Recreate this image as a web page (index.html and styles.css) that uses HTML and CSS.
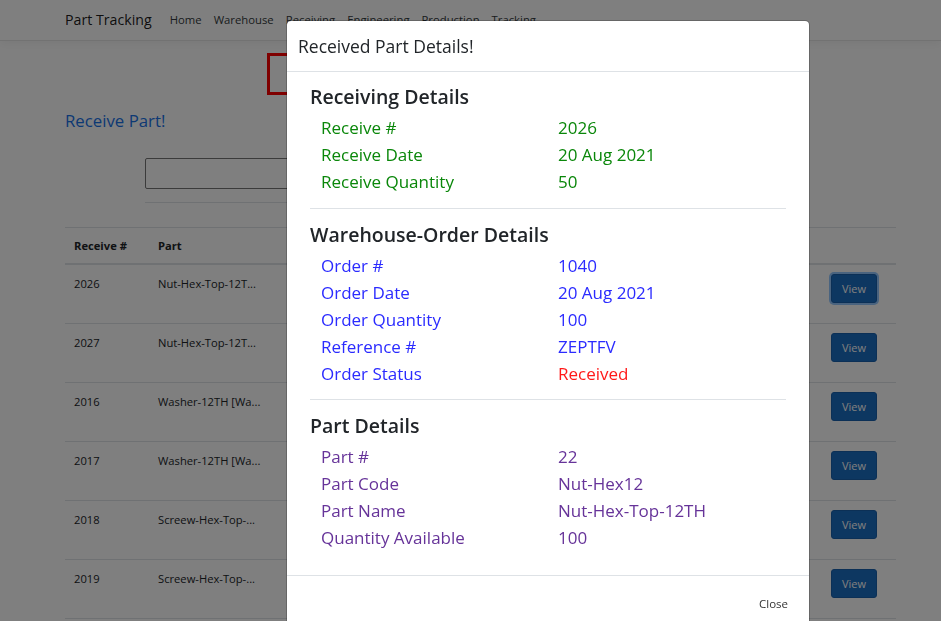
FILE: index.html
```html
<!DOCTYPE html>
<html lang="en">
<head>
<meta charset="utf-8">
<title>Part Tracking</title>
<link rel="stylesheet" href="styles.css">
</head>
<body>
<header class="navbar">
  <div class="nav-inner">
    <a class="brand">Part Tracking</a>
    <nav class="nav-links">
      <a>Home</a>
      <a>Warehouse</a>
      <a>Receiving</a>
      <a>Engineering</a>
      <a>Production</a>
      <a>Tracking</a>
    </nav>
  </div>
</header>

<main class="page">
  <div class="banner"></div>
  <h2 class="page-title">Receive Part!</h2>
  <div class="search"><input class="search-input" type="text"></div>
  <hr class="search-rule">
  <table class="parts">
    <thead>
      <tr><th class="c-num">Receive #</th><th class="c-part">Part</th><th class="c-fill"></th><th class="c-act"></th></tr>
    </thead>
    <tbody>
      <tr><td>2026</td><td>Nut-Hex-Top-12T...</td><td></td><td class="c-act"><button class="btn-view is-focused">View</button></td></tr>
      <tr><td>2027</td><td>Nut-Hex-Top-12T...</td><td></td><td class="c-act"><button class="btn-view">View</button></td></tr>
      <tr><td>2016</td><td>Washer-12TH [Wa...</td><td></td><td class="c-act"><button class="btn-view">View</button></td></tr>
      <tr><td>2017</td><td>Washer-12TH [Wa...</td><td></td><td class="c-act"><button class="btn-view">View</button></td></tr>
      <tr><td>2018</td><td>Screew-Hex-Top-...</td><td></td><td class="c-act"><button class="btn-view">View</button></td></tr>
      <tr><td>2019</td><td>Screew-Hex-Top-...</td><td></td><td class="c-act"><button class="btn-view">View</button></td></tr>
    </tbody>
  </table>
</main>

<div class="backdrop">
  <div class="modal">
    <div class="modal-header">
      <h5 class="modal-title">Received Part Details!</h5>
    </div>
    <div class="modal-body">
      <section class="detail-section">
        <h4 class="section-title">Receiving Details</h4>
        <dl class="details tone-green">
          <dt>Receive #</dt><dd>2026</dd>
          <dt>Receive Date</dt><dd>20 Aug 2021</dd>
          <dt>Receive Quantity</dt><dd>50</dd>
        </dl>
      </section>
      <hr class="section-rule">
      <section class="detail-section">
        <h4 class="section-title">Warehouse-Order Details</h4>
        <dl class="details tone-blue">
          <dt>Order #</dt><dd>1040</dd>
          <dt>Order Date</dt><dd>20 Aug 2021</dd>
          <dt>Order Quantity</dt><dd>100</dd>
          <dt>Reference #</dt><dd>ZEPTFV</dd>
          <dt>Order Status</dt><dd class="status-received">Received</dd>
        </dl>
      </section>
      <hr class="section-rule">
      <section class="detail-section">
        <h4 class="section-title">Part Details</h4>
        <dl class="details tone-purple">
          <dt>Part #</dt><dd>22</dd>
          <dt>Part Code</dt><dd>Nut-Hex12</dd>
          <dt>Part Name</dt><dd>Nut-Hex-Top-12TH</dd>
          <dt>Quantity Available</dt><dd>100</dd>
        </dl>
      </section>
    </div>
    <div class="modal-footer">
      <button class="btn-close">Close</button>
    </div>
  </div>
</div>
</body>
</html>
```
FILE: styles.css
```css
* { box-sizing: border-box; }

html, body { margin: 0; }

body {
  font-family: "Open Sans", "Noto Sans", sans-serif;
  font-size: 11.2px;
  line-height: 1.5;
  color: #212529;
  background: #fff;
}

/* ---------- navbar ---------- */
.navbar {
  height: 41px;
  background: #fff;
  border-bottom: 1px solid #e5e5e5;
  box-shadow: 0 3px 9px rgba(0, 0, 0, .05);
}
.nav-inner {
  display: flex;
  align-items: center;
  height: 40px;
  padding-left: 65px;
}
.brand {
  font-size: 14.2px;
  color: rgba(0, 0, 0, .9);
  margin-right: 12px;
}
.nav-links { display: flex; }
.nav-links a {
  font-size: 11.3px;
  color: #343a40;
  padding: 0 6px;
}

/* ---------- page ---------- */
.page { margin: 0 45px 0 65px; }

.banner {
  width: 427px;
  height: 42px;
  margin: 12px auto 0;
  border: 3px solid #f00;
}

.page-title {
  margin: 14px 0 0;
  font-size: 16.8px;
  line-height: 24px;
  font-weight: 400;
  color: #1a73e8;
}

.search { margin-top: 25px; padding-left: 80px; }
.search-input {
  display: block;
  width: 600px;
  height: 31px;
  border: 1px solid #767676;
  border-radius: 2px;
  background: #fff;
}
.search-rule {
  margin: 13px 0 0 80px;
  width: 600px;
  height: 0;
  border: 0;
  border-top: 1px solid #dee2e6;
}

.parts {
  width: 100%;
  margin-top: 24px;
  border-collapse: collapse;
}
.parts th {
  text-align: left;
  font-weight: 700;
  line-height: 17px;
  padding: 9px 9px;
  border-top: 1px solid #dee2e6;
  border-bottom: 2px solid #dee2e6;
  white-space: nowrap;
}
.parts td {
  vertical-align: top;
  line-height: 17px;
  padding: 10px 9px 31px;
  border-top: 1px solid #dee2e6;
  white-space: nowrap;
}
.parts tbody tr:last-child td { border-bottom: 1px solid #dee2e6; }
.parts .c-num { width: 84px; }
.parts .c-part { width: 140px; }
.parts .c-act { width: 74px; }
.parts td.c-act { padding: 9px 9px 19px; }

.btn-view {
  font-family: inherit;
  font-size: 11px;
  line-height: 17px;
  padding: 5px 10px;
  color: #fff;
  background: #1b6ec2;
  border: 1px solid #1861ac;
  border-radius: 3px;
}
.btn-view.is-focused { box-shadow: 0 0 0 2px rgba(38, 143, 255, .5); }

/* ---------- modal ---------- */
.backdrop {
  position: fixed;
  inset: 0;
  background: rgba(0, 0, 0, .5);
  padding: 20px 0 0 286px;
}
.modal {
  width: 524px;
  background: #fff;
  background-clip: padding-box;
  border: 1px solid rgba(0, 0, 0, .2);
  border-radius: 5px;
}
.modal-header {
  height: 51px;
  display: flex;
  align-items: center;
  padding: 0 11px;
  border-bottom: 1px solid #dee2e6;
}
.modal-title {
  margin: 0;
  font-size: 17.5px;
  font-weight: 400;
  line-height: 26px;
  color: #212529;
}
.modal-body { padding: 13px 23px 23.5px; }

.section-title {
  margin: 0 0 5px;
  font-size: 19.5px;
  line-height: 24px;
  font-weight: 600;
  color: #212529;
}
.section-rule {
  margin: 12.5px 0 14px;
  height: 0;
  border: 0;
  border-top: 1px solid #dee2e6;
}

.details {
  display: grid;
  grid-template-columns: 237px 1fr;
  margin: 0;
  padding-left: 11px;
  font-size: 17px;
  line-height: 27px;
}
.details dt, .details dd { margin: 0; font-weight: 400; }

.tone-green { color: #0a870a; }
.tone-blue { color: #2b2bff; }
.tone-purple { color: #663399; }
.status-received { color: #ff1a1a; }

.modal-footer {
  display: flex;
  justify-content: flex-end;
  padding: 13px 10px 12px;
  border-top: 1px solid #dee2e6;
}
.btn-close {
  font-family: inherit;
  font-size: 11.5px;
  line-height: 17px;
  padding: 5px 10px;
  color: #333;
  background: none;
  border: 1px solid transparent;
}
```
